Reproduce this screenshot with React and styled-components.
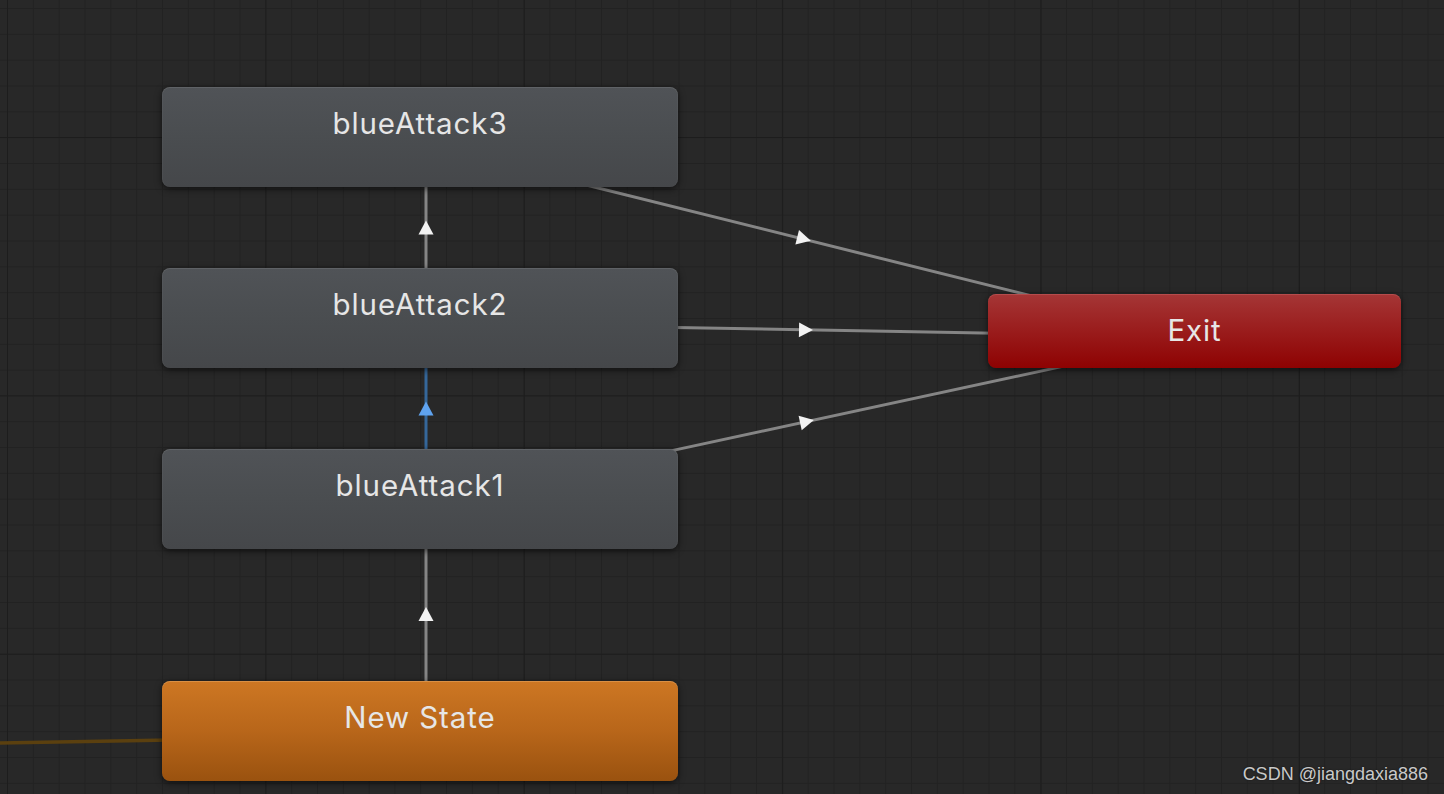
import React from "react";
import styled, { createGlobalStyle, css } from "styled-components";

const GlobalStyle = createGlobalStyle`
  html, body {
    margin: 0;
    padding: 0;
    background: #282828;
  }
  body {
    font-family: Inter, "Noto Sans", "Liberation Sans", sans-serif;
    overflow: hidden;
  }
`;

const Canvas = styled.div`
  position: relative;
  width: 1444px;
  height: 794px;
  overflow: hidden;
  background-color: #282828;
  background-image:
    linear-gradient(to right, #1d1d1d 1px, transparent 1px),
    linear-gradient(to bottom, #1d1d1d 1px, transparent 1px),
    linear-gradient(to right, #222222 1px, transparent 1px),
    linear-gradient(to bottom, #222222 1px, transparent 1px);
  background-size:
    258.4px 258.4px,
    258.4px 258.4px,
    25.84px 25.84px,
    25.84px 25.84px;
  background-position:
    7px 137px,
    7px 137px,
    7px 8px,
    7px 8px;
`;

const EdgeLayer = styled.svg`
  position: absolute;
  inset: 0;
  width: 100%;
  height: 100%;
  pointer-events: none;
`;

const variants = {
  default: css`
    background: linear-gradient(to bottom, #505357 0%, #4a4d50 50%, #45474a 100%);
    box-shadow:
      inset 0 1px 0 rgba(255, 255, 255, 0.09),
      inset 1px 0 0 rgba(255, 255, 255, 0.03),
      inset -1px 0 0 rgba(255, 255, 255, 0.03),
      0 2px 7px rgba(0, 0, 0, 0.6);
  `,
  entry: css`
    background: linear-gradient(to bottom, #cd7723 0%, #b8661a 50%, #9a520f 100%);
    box-shadow:
      inset 0 1px 0 rgba(255, 220, 170, 0.25),
      0 2px 7px rgba(0, 0, 0, 0.6);
  `,
  exit: css`
    background: linear-gradient(to bottom, #a53636 0%, #9a1c1c 50%, #8e0202 100%);
    box-shadow:
      inset 0 1px 0 rgba(255, 180, 180, 0.18),
      0 2px 7px rgba(0, 0, 0, 0.6);
  `,
};

const StateNode = styled.div`
  position: absolute;
  left: ${(p) => p.$x}px;
  top: ${(p) => p.$y}px;
  width: ${(p) => p.$w}px;
  height: ${(p) => p.$h}px;
  box-sizing: border-box;
  border-radius: 8px;
  display: flex;
  justify-content: center;
  ${(p) => variants[p.$variant]}
`;

const StateLabel = styled.span`
  display: block;
  padding-top: 22px;
  font-family: Inter, "Noto Sans", sans-serif;
  font-size: 29.5px;
  line-height: 29.5px;
  letter-spacing: 0.9px;
  color: #e6e6e6;
  white-space: nowrap;
`;

const Watermark = styled.div`
  position: absolute;
  right: 16px;
  bottom: 9px;
  font-family: "Liberation Sans", Arial, sans-serif;
  font-size: 18px;
  color: #c9c9c9;
  text-shadow: 0 0 2px rgba(0, 0, 0, 0.6);
`;

const nodes = [
  { id: "a3", label: "blueAttack3", x: 162, y: 87, w: 516, h: 100, variant: "default" },
  { id: "a2", label: "blueAttack2", x: 162, y: 268, w: 516, h: 100, variant: "default" },
  { id: "a1", label: "blueAttack1", x: 162, y: 449, w: 516, h: 100, variant: "default" },
  { id: "ns", label: "New State", x: 162, y: 681, w: 516, h: 100, variant: "entry" },
  { id: "ex", label: "Exit", x: 988, y: 294, w: 413, h: 74, variant: "exit" },
];

const edges = [
  { from: [426, 700], to: [426, 530], mid: [426, 614], color: "#858585", arrow: "#f2f2f2" },
  { from: [426, 470], to: [426, 350], mid: [426, 408.5], color: "#35679a", arrow: "#5fa3ef" },
  { from: [426, 290], to: [426, 170], mid: [426, 227.5], color: "#858585", arrow: "#f2f2f2" },
  { from: [560, 178.5], to: [1060, 303], mid: [804, 239], color: "#858585", arrow: "#f2f2f2" },
  { from: [660, 327.2], to: [1010, 333.4], mid: [806, 330], color: "#858585", arrow: "#f2f2f2" },
  { from: [650, 455.4], to: [1080, 362.6], mid: [807, 421.5], color: "#858585", arrow: "#f2f2f2" },
];

function Arrow({ from, to, mid, fill }) {
  const dx = to[0] - from[0];
  const dy = to[1] - from[1];
  const angle = (Math.atan2(dy, dx) * 180) / Math.PI;
  return (
    <polygon
      points="7,0 -7,-7.5 -7,7.5"
      fill={fill}
      transform={`translate(${mid[0]} ${mid[1]}) rotate(${angle})`}
    />
  );
}

export default function App() {
  return (
    <>
      <GlobalStyle />
      <Canvas>
        <EdgeLayer viewBox="0 0 1444 794">
          <line x1={-5} y1={743} x2={200} y2={739.5} stroke="#5b400f" strokeWidth={3.5} />
          {edges.map((e, i) => (
            <g key={i}>
              <line
                x1={e.from[0]}
                y1={e.from[1]}
                x2={e.to[0]}
                y2={e.to[1]}
                stroke={e.color}
                strokeWidth={3}
              />
              <Arrow from={e.from} to={e.to} mid={e.mid} fill={e.arrow} />
            </g>
          ))}
        </EdgeLayer>
        {nodes.map((n) => (
          <StateNode key={n.id} $x={n.x} $y={n.y} $w={n.w} $h={n.h} $variant={n.variant}>
            <StateLabel>{n.label}</StateLabel>
          </StateNode>
        ))}
        <Watermark>CSDN @jiangdaxia886</Watermark>
      </Canvas>
    </>
  );
}
